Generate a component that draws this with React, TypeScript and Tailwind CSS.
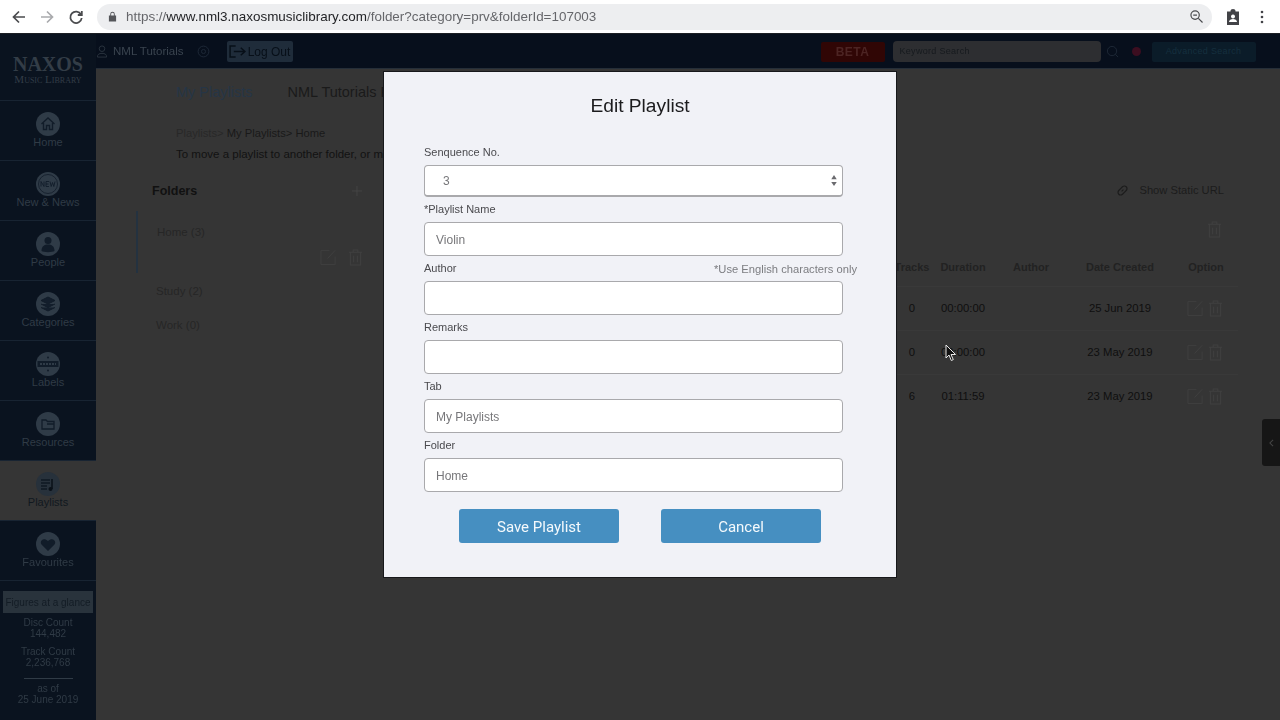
import type { ReactNode } from "react";

const navItems = [
  { label: "Home", glyph: "home" },
  { label: "New & News", glyph: "new" },
  { label: "People", glyph: "people" },
  { label: "Categories", glyph: "layers" },
  { label: "Labels", glyph: "label" },
  { label: "Resources", glyph: "folder" },
  { label: "Playlists", glyph: "music", active: true },
  { label: "Favourites", glyph: "heart" },
];

const rows = [
  { tracks: "0", duration: "00:00:00", date: "25 Jun 2019" },
  { tracks: "0", duration: "00:00:00", date: "23 May 2019" },
  { tracks: "6", duration: "01:11:59", date: "23 May 2019" },
];

function NavGlyph({ glyph, active }: { glyph: string; active?: boolean }) {
  const ink = active ? "#1f2b36" : "#111c29";
  const disc = active ? "#27313b" : "#2f3b47";
  return (
    <svg viewBox="0 0 24 24" className="w-6 h-6">
      <circle cx="12" cy="12" r="12" fill={disc} />
      {glyph === "home" && (
        <path d="M5.5 12 12 6l6.500 6M7.500 11v6.500h3v-4h3v4h3V11" fill="none" stroke={ink} strokeWidth="1.400" />
      )}
      {glyph === "new" && (
        <>
          <circle cx="12" cy="12" r="9.500" fill="none" stroke={ink} strokeWidth="0.800" />
          <path d="M5 14.500v-5l3 5v-5M13 9.500h-3v5h3M10 12h2.500M14 9.500l1.200 5 1.300-4 1.300 4 1.200-5" fill="none" stroke={ink} strokeWidth="0.900" />
        </>
      )}
      {glyph === "people" && (
        <>
          <circle cx="12" cy="8.500" r="3.500" fill={ink} />
          <path d="M5.500 19c0-5 3-6.500 6.500-6.500s6.500 1.500 6.500 6.500c-2 1.500-11 1.500-13 0Z" fill={ink} />
        </>
      )}
      {glyph === "layers" && (
        <path d="M12 5l7 3.500-7 3.500-7-3.500ZM5 12l7 3.500 7-3.500M5 15.500 12 19l7-3.500" fill={ink} stroke={ink} strokeWidth="1" fillOpacity="0.900" />
      )}
      {glyph === "label" && (
        <>
          <rect x="1.500" y="9" width="21" height="6" fill={ink} />
          <path d="M4 12h16" stroke={disc} strokeWidth="2" strokeDasharray="2 1" />
          <circle cx="12" cy="5.500" r="1" fill={ink} />
          <circle cx="12" cy="18.500" r="1" fill={ink} />
        </>
      )}
      {glyph === "folder" && (
        <path d="M6 8h4l1.500 1.500H18V17H6ZM11 12h7" fill="none" stroke={ink} strokeWidth="1.300" />
      )}
      {glyph === "music" && (
        <>
          <path d="M5 8h9M5 11h9M5 14h6M5 17h6" stroke="#141e28" strokeWidth="1.800" />
          <path d="M16 7v10" stroke="#0a1118" strokeWidth="1.500" />
          <circle cx="14.500" cy="17" r="2" fill="#0a1118" />
        </>
      )}
      {glyph === "heart" && (
        <path d="M12 19 5.500 12.500C3 9 7.500 5 12 9c4.500-4 9 0 6.500 3.500Z" fill={ink} />
      )}
    </svg>
  );
}

function EditIcon() {
  return (
    <svg viewBox="0 0 18 18" className="w-[17px] h-[17px]" fill="none" stroke="#404040" strokeWidth="1">
      <path d="M10 1.500H1v15h15V8M8 10l8-8.500" />
    </svg>
  );
}

function TrashIcon() {
  return (
    <svg viewBox="0 0 16 18" className="w-[15px] h-[17px]" fill="none" stroke="#404040" strokeWidth="1.100">
      <path d="M1 3.500h14M5.500 3.500V1h5v2.500M2.500 3.500v13.500h11V3.500M6 7v7M10 7v7" />
    </svg>
  );
}

function Field({ label, value, note }: { label: string; value?: string; note?: string }) {
  return (
    <div className="flex flex-col">
      <div className="h-[25px] flex items-start justify-between">
        <span className="text-[11px] leading-[14px] mt-[5px] text-[#4a4a4e]">{label}</span>
        {note && <span className="text-[11.200px] leading-[14px] mr-[-13px] mt-[6px] text-[#7c7d81]">{note}</span>}
      </div>
      <input
        readOnly
        value={value ?? ""}
        className="h-[34px] w-[419px] rounded-[4px] border-[1.500px] border-[#a9a9ac] bg-white px-[11px] pt-[2px] text-xs text-[#77777a] outline-none"
      />
    </div>
  );
}

function HeaderText({ children, className }: { children: ReactNode; className: string }) {
  return <span className={`text-xs ${className}`}>{children}</span>;
}

export default function App() {
  return (
    <div className="relative w-[1280px] h-[720px] overflow-hidden flex flex-col bg-[#353535] font-['Liberation_Sans',Arial,sans-serif]">
      {/* browser toolbar */}
      <div className="h-[34px] shrink-0 flex items-center bg-white pl-[11px] border-b border-[#1c1f24] blur-[0.3px]">
        <svg viewBox="0 0 16 16" className="w-4 h-4" fill="none" stroke="#4a4b4e" strokeWidth="1.700">
          <path d="M14 8H2.500M8 2.500 2.500 8 8 13.500" />
        </svg>
        <svg viewBox="0 0 16 16" className="w-4 h-4 ml-3" fill="none" stroke="#a9aaad" strokeWidth="1.700">
          <path d="M2 8h11.500M8 2.500 13.500 8 8 13.500" />
        </svg>
        <svg viewBox="0 0 16 16" className="w-4 h-4 ml-[13px]" fill="none" stroke="#4a4b4e" strokeWidth="1.800">
          <path d="M13 5.500A5.700 5.700 0 1 0 13.700 9M13.800 2v4h-4" />
        </svg>
        <div className="ml-[13px] w-[1115px] h-[26px] rounded-full bg-[#edeef0] flex items-center pl-[11px] pr-2">
          <svg viewBox="0 0 10 12" className="w-[9px] h-[11px]" fill="#55565a">
            <path d="M1 5h8v6.500H1ZM2.500 5V3.200a2.500 2.500 0 0 1 5 0V5H6.500V3.200a1.500 1.500 0 0 0-3 0V5Z" />
          </svg>
          <span className="ml-[9px] pt-[1px] text-[13.450px] text-[#65666a] whitespace-nowrap">
            https://<span className="text-[#232427]">www.nml3.naxosmusiclibrary.com</span>/folder?category=prv&amp;folderId=107003
          </span>
          <svg viewBox="0 0 14 14" className="w-[13px] h-[13px] ml-auto mr-[1px]" fill="none" stroke="#4a4b4e" strokeWidth="1.300">
            <circle cx="5.500" cy="5.500" r="4.500" />
            <path d="M3.500 5.500h4M9 9l4.500 4.500" />
          </svg>
        </div>
        <svg viewBox="0 0 14 16" className="w-[14px] h-4 ml-[14px]" fill="#424347">
          <path d="M1 2.500h3.500V1.800a2.500 1.800 0 0 1 5 0v.7H13V16H1ZM7 5.500a2 2 0 1 0 .01 0ZM3 13h8c0-2-2-3-4-3s-4 1-4 3Z" fillRule="evenodd" />
        </svg>
        <svg viewBox="0 0 4 14" className="w-1 h-[14px] ml-[20px]" fill="#424347">
          <circle cx="2" cy="2" r="1.300" />
          <circle cx="2" cy="7" r="1.300" />
          <circle cx="2" cy="12" r="1.300" />
        </svg>
      </div>

      <div className="flex-1 flex min-h-0 blur-[0.4px]">
        {/* left nav */}
        <aside className="w-[96px] shrink-0 flex flex-col bg-[#0a131f] text-[#303b46]">
          <div className="h-[67px] shrink-0 flex flex-col items-center justify-center border-b border-[#182432] pt-1">
            <span className="font-['Liberation_Serif',serif] font-bold text-[20px] leading-[19px] text-[#333d47]">NAXOS</span>
            <span className="font-['Liberation_Serif',serif] [font-variant:small-caps] text-[11px] leading-[10px] text-[#333d47] whitespace-nowrap">Music Library</span>
          </div>
          {navItems.map((item) => (
            <div
              key={item.label}
              className={`h-[60px] shrink-0 flex flex-col items-center pt-[11px] border-b border-[#182432] ${
                item.active ? "bg-[#353535] text-[#11181f]" : ""
              }`}
            >
              <NavGlyph glyph={item.glyph} active={item.active} />
              <span className="text-[11px] leading-[13px] whitespace-nowrap">{item.label}</span>
            </div>
          ))}
          <div className="mx-[3px] mt-[10px] h-[22px] bg-[#29333c] text-[#131c25] text-[10px] flex items-center justify-center whitespace-nowrap">
            Figures at a glance
          </div>
          <div className="mt-[4px] flex flex-col items-center text-[10px] leading-[11px]">
            <span>Disc Count</span>
            <span>144,482</span>
            <span className="mt-[7px]">Track Count</span>
            <span>2,236,768</span>
            <span className="w-[49px] border-t border-[#303b46] mt-[10px] mb-[4px]" />
            <span>as of</span>
            <span>25 June 2019</span>
          </div>
        </aside>

        <div className="flex-1 flex flex-col min-w-0">
          {/* top bar */}
          <header className="h-[34px] shrink-0 flex items-center bg-[#070f1c] pt-[1px]">
            <svg viewBox="0 0 12 14" className="w-3 h-[13px]" fill="none" stroke="#2b3540" strokeWidth="1">
              <circle cx="6" cy="4" r="3" />
              <path d="M1 13c0-3 2-4 5-4s5 1 5 4Z" />
            </svg>
            <HeaderText className="ml-[5px] text-[#3a444f] whitespace-nowrap text-[11.500px]">NML Tutorials</HeaderText>
            <svg viewBox="0 0 14 14" className="w-[13px] h-[13px] ml-[13px]" fill="none" stroke="#1e2938" strokeWidth="1">
              <circle cx="7" cy="7" r="5.800" />
              <circle cx="7" cy="7" r="2.200" />
            </svg>
            <div className="ml-[17px] w-[66px] h-[21px] bg-[#1f2c3a] rounded-[2px] flex items-center justify-center text-[#070f18] text-[12px] whitespace-nowrap">
              <svg viewBox="0 0 18 14" className="w-[17px] h-[13px] mr-[2px]" fill="none" stroke="#070f18" strokeWidth="1.600">
                <path d="M7 1H1v12h6M5 7h12M12.500 3l4.500 4-4.500 4" />
              </svg>
              Log Out
            </div>
            <div className="ml-[528px] w-[64px] h-[20px] bg-[#300605] rounded-[2px] flex items-center justify-center text-[#4c2423] text-[12px] font-bold tracking-[0.5px]">
              BETA
            </div>
            <div className="ml-[8px] w-[208px] h-[21px] bg-[#2d2e31] rounded-[4px] flex items-center pl-[7px] text-[#161a1e] text-[9px] tracking-[0.3px]">
              Keyword Search
            </div>
            <svg viewBox="0 0 14 14" className="w-[13px] h-[13px] ml-[5px]" fill="none" stroke="#1e2937" strokeWidth="1">
              <circle cx="6.500" cy="6.500" r="5" />
              <path d="m10 10 3 3" />
            </svg>
            <span className="ml-[13px] w-[9px] h-[9px] rounded-full bg-[#3c0e20]" />
            <div className="ml-[11px] w-[104px] h-[20px] bg-[#0b1c29] rounded-[2px] flex items-center justify-center text-[#152f3e] text-[9px] tracking-[0.3px] whitespace-nowrap">
              Advanced Search
            </div>
          </header>

          {/* page body behind the dialog */}
          <main className="flex-1 min-h-0 flex bg-[#353535] border-t border-[#252e38]">
            <section className="w-[288px] shrink-0 flex flex-col text-[#232323]">
              <div className="ml-[80px] mt-[14px] flex items-center whitespace-nowrap text-[14.500px] leading-[18px]">
                <span className="text-[#263546]">My Playlists</span>
                <span className="ml-[35px] text-[#1a1a1a]">NML Tutorials P</span>
              </div>
              <div className="ml-[80px] mt-[25px] text-[11.200px] leading-[14px] whitespace-nowrap text-[#191919]">
                <span className="text-[#282828]">Playlists&gt;</span> My Playlists&gt; Home
              </div>
              <div className="ml-[80px] mt-[7px] text-[11.500px] leading-[14px] whitespace-nowrap text-[#121212]">
                To move a playlist to another folder, or mo
              </div>
              <div className="ml-[56px] mt-[23px] w-[210px] flex items-center justify-between">
                <span className="text-[12.500px] font-bold leading-[14px] text-[#111]">Folders</span>
                <svg viewBox="0 0 10 10" className="w-[10px] h-[10px]" stroke="#474747" strokeWidth="0.800">
                  <path d="M5 0v10M0 5h10" />
                </svg>
              </div>
              <div className="ml-[40px] mt-[13px] h-[62px] border-l-2 border-[#243240] pl-[19px] pt-[14px] pr-[21px]">
                <div className="text-[11.500px] leading-[14px] text-[#262626]">Home (3)</div>
                <div className="mt-[10px] flex justify-end gap-[11px]">
                  <EditIcon />
                  <TrashIcon />
                </div>
              </div>
              <div className="ml-[60px] mt-[11px] text-[11.500px] leading-[14px] text-[#262626]">Study (2)</div>
              <div className="ml-[60px] mt-[20px] text-[11.500px] leading-[14px] text-[#262626]">Work (0)</div>
            </section>

            <section className="flex-1 min-w-0" />

            <section className="w-[386px] shrink-0 flex flex-col text-[#141414] pr-[42px]">
              <div className="mt-[114px] flex items-center justify-end pr-[14px]">
                <svg viewBox="0 0 14 14" className="w-[13px] h-[13px] mr-[10px]" fill="none" stroke="#1c1c1c" strokeWidth="1.300">
                  <path d="M6 8l2-2M5 5 7 3a2 2 0 0 1 4 4L9 9M5 5 3 7a2 2 0 0 0 4 4l2-2" />
                </svg>
                <span className="text-[11.200px] leading-[14px] whitespace-nowrap text-[#1c1c1c]">Show Static URL</span>
              </div>
              <div className="mt-[24px] flex justify-end pr-[16px]">
                <TrashIcon />
              </div>
              <div className="mt-[22px] grid grid-cols-[36px_66px_70px_108px_64px] text-[11px] font-bold leading-[14px] text-[#222]">
                <span className="text-center whitespace-nowrap">Tracks</span>
                <span className="text-center">Duration</span>
                <span className="text-center">Author</span>
                <span className="text-center">Date Created</span>
                <span className="text-center">Option</span>
              </div>
              <div className="mt-[12px] flex flex-col">
                {rows.map((row) => (
                  <div
                    key={row.date + row.duration}
                    className="h-[44px] grid grid-cols-[36px_66px_70px_108px_64px] items-center text-[11.300px] text-[#0f0f0f] border-t border-[#393939]"
                  >
                    <span className="text-center">{row.tracks}</span>
                    <span className="text-center">{row.duration}</span>
                    <span />
                    <span className="text-center">{row.date}</span>
                    <span className="flex justify-end gap-[4px] pr-[15px]">
                      <EditIcon />
                      <TrashIcon />
                    </span>
                  </div>
                ))}
              </div>
            </section>
          </main>
        </div>
      </div>

      {/* side drawer handle */}
      <div className="absolute left-[1262px] top-[419px] w-[18px] h-[47px] rounded-l-[3px] bg-[#161616] flex items-center justify-center blur-[0.4px]">
        <svg viewBox="0 0 6 10" className="w-[5px] h-2" fill="none" stroke="#454545" strokeWidth="1.300">
          <path d="M5 1 1 5l4 4" />
        </svg>
      </div>

      {/* mouse pointer */}
      <svg viewBox="0 0 12 18" className="absolute left-[945px] top-[344px] w-[12px] h-[18px]">
        <path d="M1 1v13l3-3 2.300 5.500 2-.9L6 10.500h4.500Z" fill="#111" stroke="#e8e8e8" strokeWidth="1" />
      </svg>

      {/* edit dialog */}
      <div className="absolute left-[383px] top-[71px] w-[514px] h-[507px] border border-[#17181b] bg-[#f1f2f7] blur-[0.3px]">
        <h2 className="pt-[22px] text-center text-[19.200px] leading-[24px] text-[#1b1b1d]">Edit Playlist</h2>
        <form className="mt-[22px] ml-[40px] w-[420px] flex flex-col">
          <div className="flex flex-col">
            <span className="h-[25px] pt-[5px] text-[11px] leading-[14px] text-[#4a4a4e]">Senquence No.</span>
            <div className="h-[32px] w-[419px] rounded-[4px] border border-[#a9a9ac] border-b-2 bg-white flex items-center justify-between pl-[18px] pr-[5px] text-xs text-[#77777a]">
              3
              <svg viewBox="0 0 6 12" className="w-[6px] h-[11px]" fill="#6a6a6e">
                <path d="M3 0 6 4.500H0ZM3 12 0 7.500h6Z" />
              </svg>
            </div>
          </div>
          <div className="flex flex-col">
            <Field label="*Playlist Name" value="Violin" />
            <Field label="Author" note="*Use English characters only" />
            <Field label="Remarks" />
            <Field label="Tab" value="My Playlists" />
            <Field label="Folder" value="Home" />
          </div>
          <div className="mt-[17px] flex pl-[35px] gap-[42px]">
            <button type="button" className="w-[160px] h-[34px] pt-[2px] rounded-[3px] bg-[#468fc1] text-[#f4f9fc] font-['Roboto',sans-serif] text-[15px]">Save Playlist</button>
            <button type="button" className="w-[160px] h-[34px] pt-[2px] rounded-[3px] bg-[#468fc1] text-[#f4f9fc] font-['Roboto',sans-serif] text-[15px]">Cancel</button>
          </div>
        </form>
      </div>
    </div>
  );
}
